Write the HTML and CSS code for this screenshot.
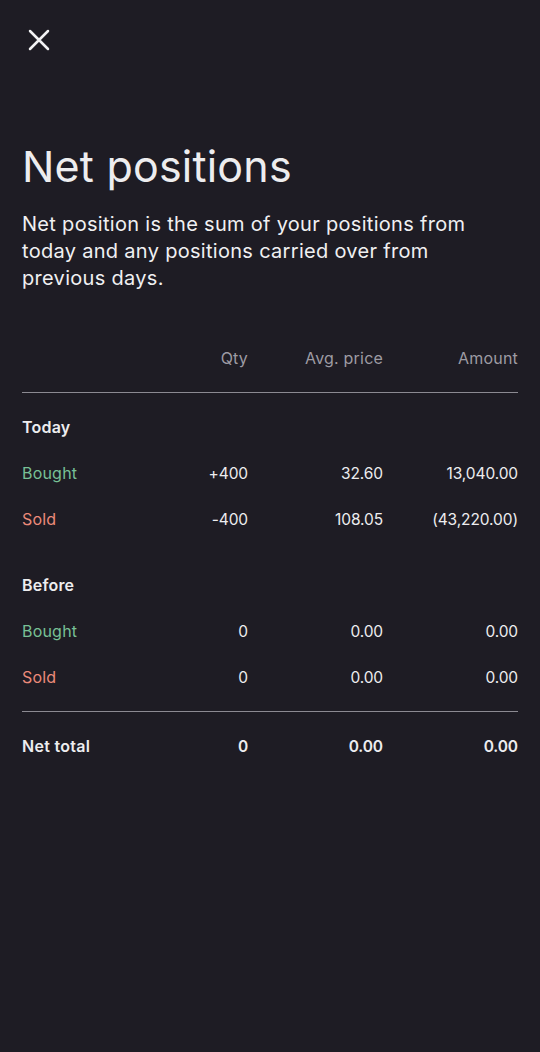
FILE: index.html
```html
<!DOCTYPE html>
<html lang="en">
<head>
  <meta charset="UTF-8">
  <meta name="viewport" content="width=device-width, initial-scale=1">
  <title>Net positions</title>
  <link rel="stylesheet" href="styles.css">
</head>
<body>
  <div class="sheet">
    <button class="close" aria-label="Close">
      <svg width="22" height="22" viewBox="0 0 22 22">
        <path d="M2 2 L20 20 M20 2 L2 20" stroke="#f2f2f4" stroke-width="2.5" stroke-linecap="round" fill="none"/>
      </svg>
    </button>

    <h1>Net positions</h1>
    <p class="intro">Net position is the sum of your positions from today and any positions carried over from previous days.</p>

    <div class="table">
      <div class="row head">
        <span></span>
        <span>Qty</span>
        <span>Avg. price</span>
        <span>Amount</span>
      </div>

      <div class="group">
        <div class="group-title">Today</div>
        <div class="row">
          <span class="buy">Bought</span>
          <span class="num">+400</span>
          <span class="num">32.60</span>
          <span class="num">13,040.00</span>
        </div>
        <div class="row">
          <span class="sell">Sold</span>
          <span class="num">-400</span>
          <span class="num">108.05</span>
          <span class="num">(43,220.00)</span>
        </div>
      </div>

      <div class="group before">
        <div class="group-title">Before</div>
        <div class="row">
          <span class="buy">Bought</span>
          <span class="num">0</span>
          <span class="num">0.00</span>
          <span class="num">0.00</span>
        </div>
        <div class="row">
          <span class="sell">Sold</span>
          <span class="num">0</span>
          <span class="num">0.00</span>
          <span class="num">0.00</span>
        </div>
      </div>

      <div class="row total">
        <span>Net total</span>
        <span class="num">0</span>
        <span class="num">0.00</span>
        <span class="num">0.00</span>
      </div>
    </div>
  </div>
</body>
</html>
```

FILE: styles.css
```css
body {
  margin: 0;
  background: #1e1c24;
  font-family: Inter, "Noto Sans", sans-serif;
  color: #ededef;
  height: 1052px;
}

.sheet {
  padding: 0 22px;
}

.close {
  display: block;
  background: none;
  border: none;
  padding: 0;
  margin: 29px 0 0 6px;
  width: 22px;
  height: 22px;
  cursor: pointer;
}

.close svg {
  display: block;
}

h1 {
  margin: 88px 0 0;
  font-size: 43px;
  font-weight: 400;
  line-height: 54px;
  letter-spacing: 0.2px;
}

.intro {
  margin: 18px 0 0;
  max-width: 472px;
  font-size: 20px;
  line-height: 27px;
  letter-spacing: 0.3px;
  color: #f0f0f2;
}

.table {
  margin-top: 56px;
  font-size: 16px;
  letter-spacing: 0.2px;
}

.row {
  display: grid;
  grid-template-columns: 1fr 120px 135px 135px;
  align-items: center;
  height: 46px;
}

.row span:not(:first-child) {
  text-align: right;
}

.num {
  font-size: 15.5px;
  letter-spacing: -0.1px;
}

.head {
  height: 44px;
  color: #9d9ba3;
  border-bottom: 1px solid #8c8a92;
  align-items: start;
}

.group {
  padding: 11px 0 9px;
}

.group.before {
  padding-bottom: 11px;
  border-bottom: 1px solid #8c8a92;
}

.group-title {
  font-weight: 600;
  height: 46px;
  line-height: 46px;
}

.buy {
  color: #78c096;
}

.sell {
  color: #ec8a7a;
}

.total {
  font-weight: 600;
  letter-spacing: 0.3px;
  padding-top: 11px;
}
```
